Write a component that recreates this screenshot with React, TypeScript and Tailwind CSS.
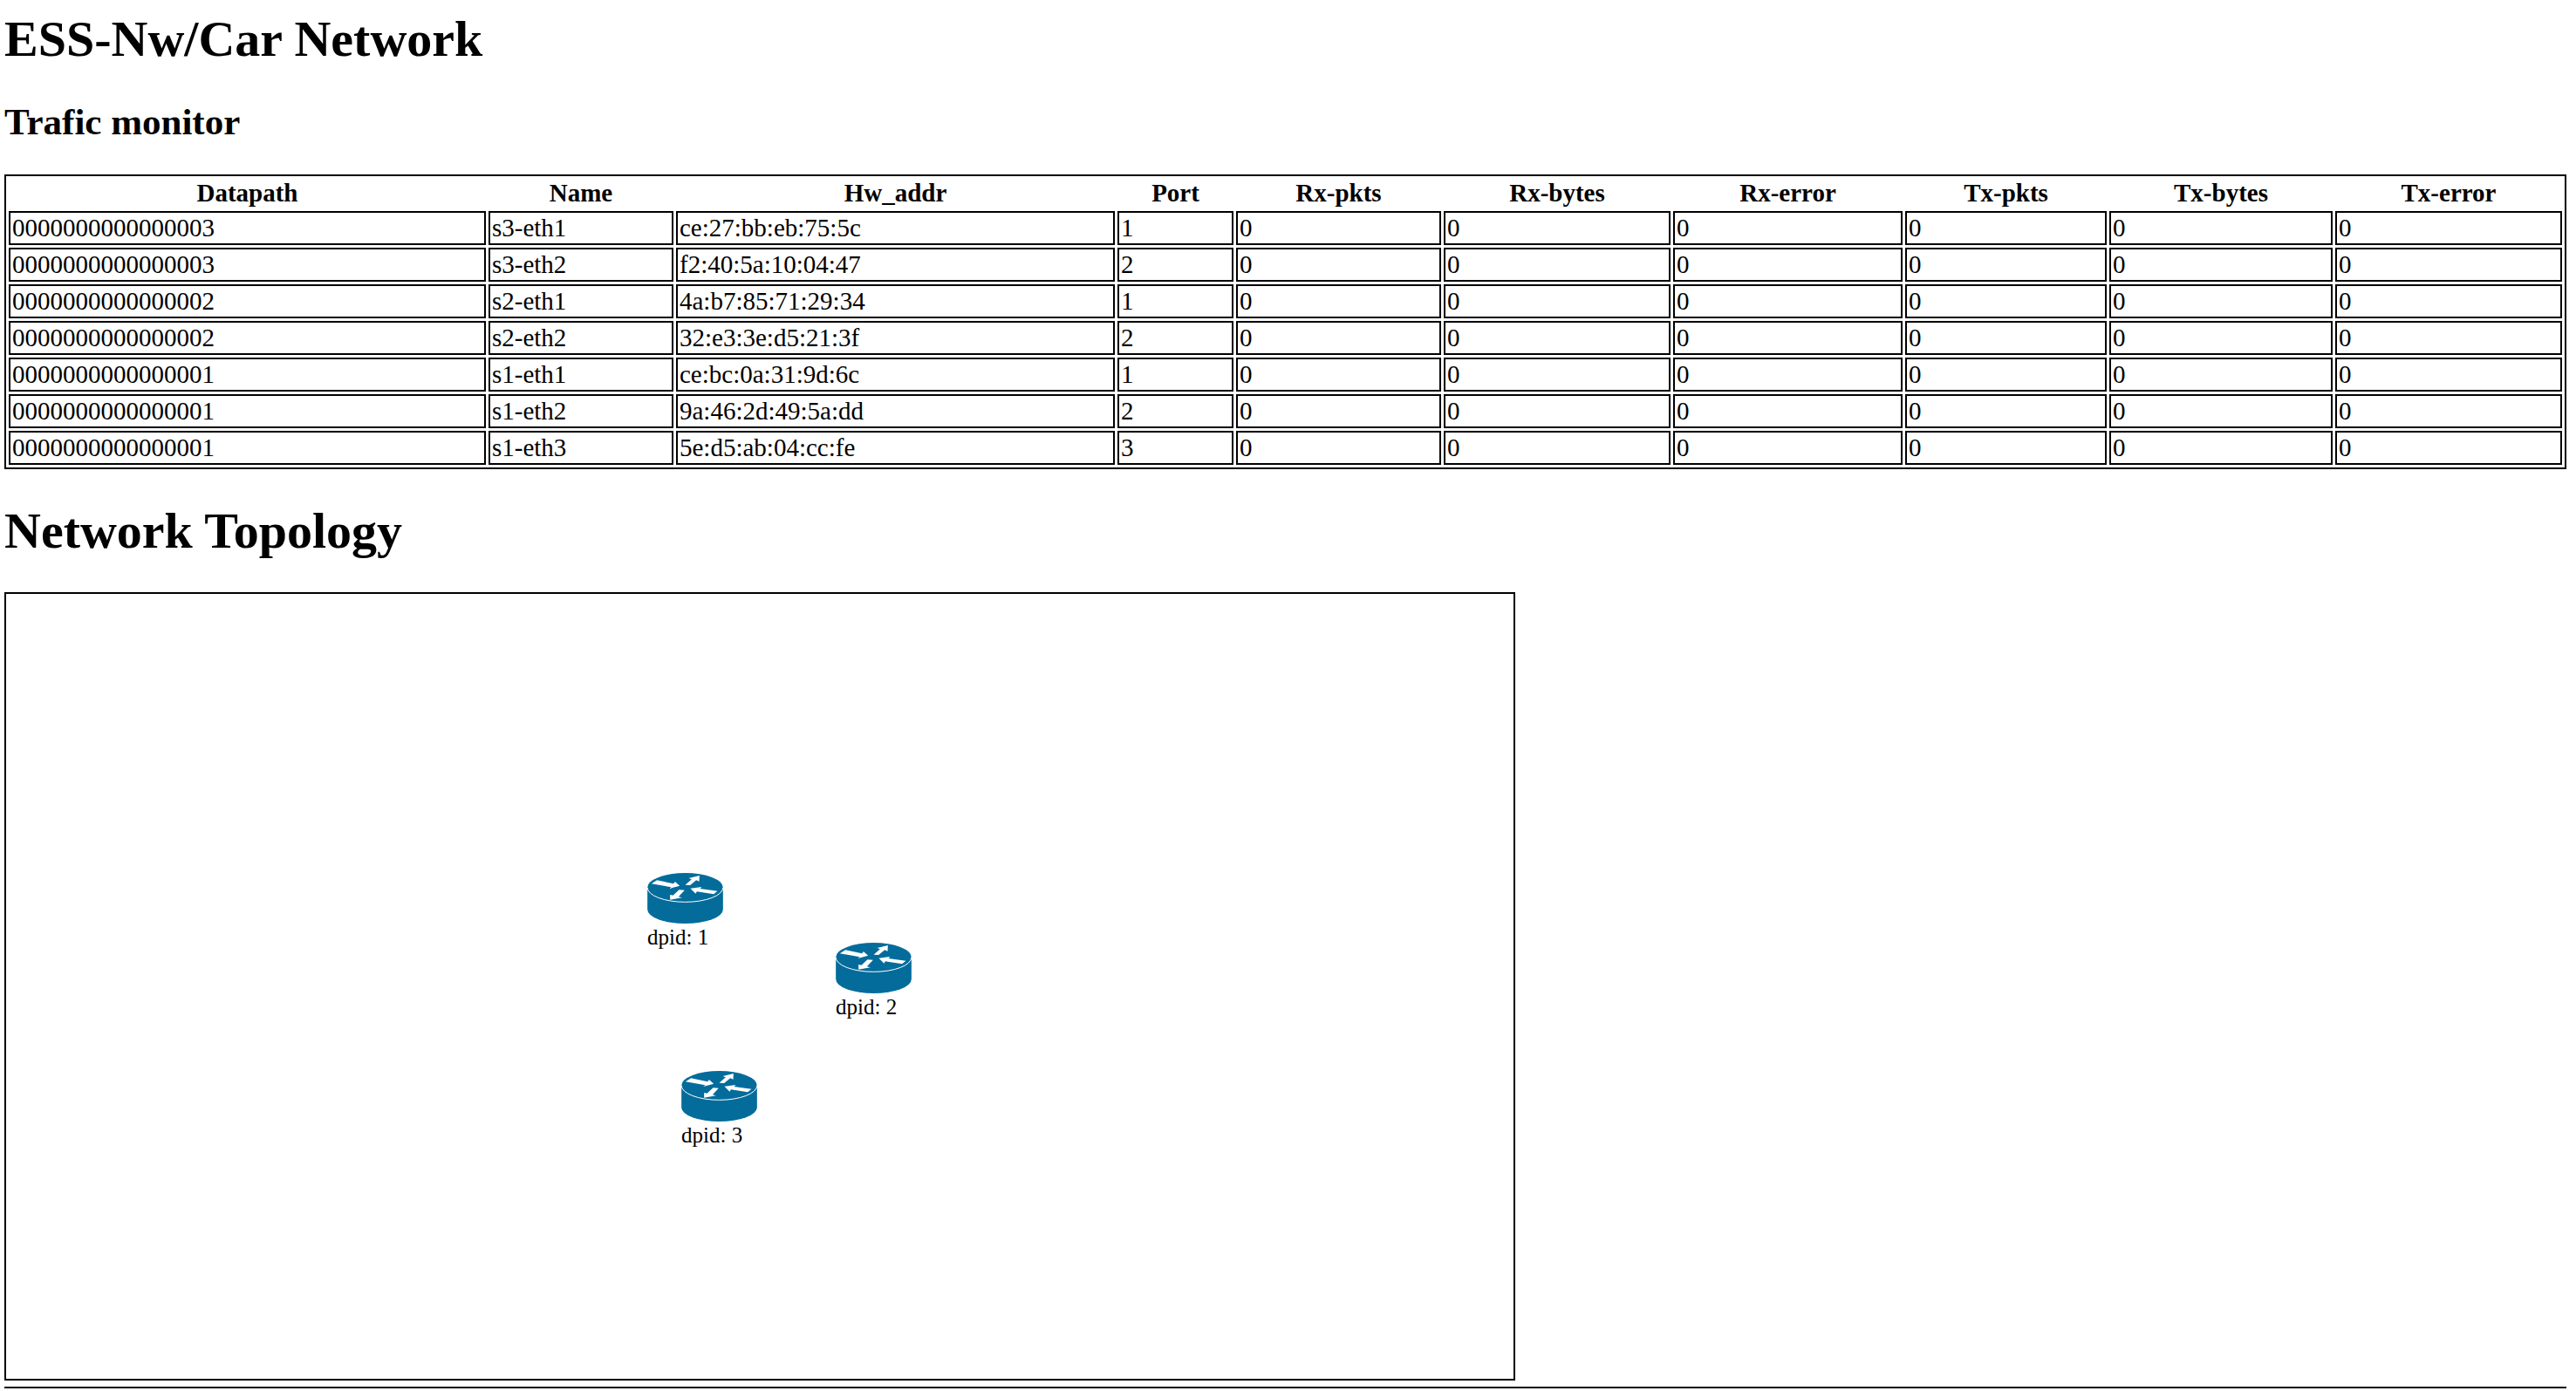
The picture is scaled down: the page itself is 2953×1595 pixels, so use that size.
const columns = [
  { name: 'Datapath', width: 'w-[547px]' },
  { name: 'Name', width: 'w-[212px]' },
  { name: 'Hw_addr', width: 'w-[503px]' },
  { name: 'Port', width: 'w-[133px]' },
  { name: 'Rx-pkts', width: 'w-[235px]' },
  { name: 'Rx-bytes', width: 'w-[260px]' },
  { name: 'Rx-error', width: 'w-[263px]' },
  { name: 'Tx-pkts', width: 'w-[231px]' },
  { name: 'Tx-bytes', width: 'w-[256px]' },
  { name: 'Tx-error', width: 'w-[260px]' },
];

const ports = [
  ['0000000000000003', 's3-eth1', 'ce:27:bb:eb:75:5c', '1'],
  ['0000000000000003', 's3-eth2', 'f2:40:5a:10:04:47', '2'],
  ['0000000000000002', 's2-eth1', '4a:b7:85:71:29:34', '1'],
  ['0000000000000002', 's2-eth2', '32:e3:3e:d5:21:3f', '2'],
  ['0000000000000001', 's1-eth1', 'ce:bc:0a:31:9d:6c', '1'],
  ['0000000000000001', 's1-eth2', '9a:46:2d:49:5a:dd', '2'],
  ['0000000000000001', 's1-eth3', '5e:d5:ab:04:cc:fe', '3'],
].map((port) => [...port, '0', '0', '0', '0', '0', '0']);

const switches = [
  { dpid: 1, x: 735, y: 320 },
  { dpid: 2, x: 951, y: 400 },
  { dpid: 3, x: 774, y: 547 },
];

function RouterIcon() {
  return (
    <svg viewBox="0 0 260 174" className="block h-[58px] w-[87px]" aria-hidden="true">
      <path d="M0 50A130 50 0 0 1 260 50V125A130 49 0 0 1 0 125Z" fill="#036c9b" />
      <path d="M0 50A130 50 0 0 0 260 50" fill="none" stroke="#fff" strokeWidth="3" />
      <g fill="#fff">
        <path d="M14 37L33 25L90 37L95 30L111 44L75 54L82 49Z" />
        <path d="M130 41L152 22L142 18L179 9L178 29L168 25L147 42Z" />
        <path d="M241 62L228 73L170 64L166 71L148 53L187 48L181 54Z" />
        <path d="M128 59L107 82L119 85L78 92L78 75L88 77L109 58Z" />
      </g>
    </svg>
  );
}

export default function App() {
  return (
    <main className="min-h-screen bg-white pt-[12px] pr-[11px] pl-[5px] font-['Liberation_Serif',serif] text-[29px] leading-[31px] text-black">
      <h1 className="text-[58px] leading-[66px] font-bold">ESS-Nw/Car Network</h1>
      <h2 className="mt-[38px] text-[43px] leading-[48px] font-bold">Trafic monitor</h2>
      <table className="mt-[36px] w-full border-separate border-spacing-[3px] border-2 border-black">
        <thead>
          <tr>
            {columns.map(({ name, width }) => (
              <th key={name} scope="col" className={`${width} px-[2px] pt-px pb-[2px] text-center font-bold`}>{name}</th>
            ))}
          </tr>
        </thead>
        <tbody>
          {ports.map((port) => (
            <tr key={port[1]}>
              {port.map((value, i) => (
                <td key={columns[i].name} className="border-2 border-black p-[2px]">{value}</td>
              ))}
            </tr>
          ))}
        </tbody>
      </table>
      <h1 className="mt-[38px] text-[58px] leading-[66px] font-bold">Network Topology</h1>
      <section aria-label="Network Topology" className="relative mt-[37px] h-[904px] w-full max-w-[1732px] border-2 border-black">
        {switches.map(({ dpid, x, y }) => (
          <div key={dpid} className="absolute text-[25px] leading-[32px]" style={{ left: x, top: y }}>
            <RouterIcon />
            <span className="whitespace-nowrap">dpid: {dpid}</span>
          </div>
        ))}
      </section>
      <hr className="mt-[7px] border-t-2 border-black" />
    </main>
  );
}
